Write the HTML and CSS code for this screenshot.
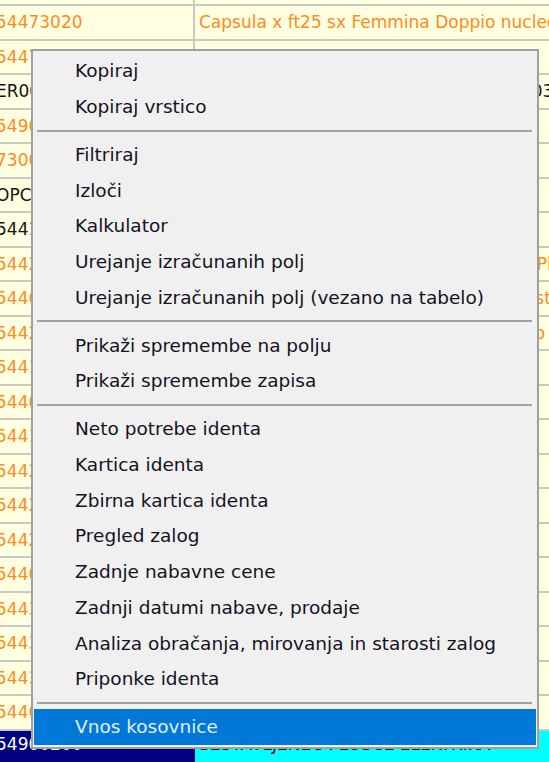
FILE: index.html
```html
<!DOCTYPE html>
<html lang="sl">
<head>
  <meta charset="UTF-8">
  <title>Identi</title>
  <link rel="stylesheet" href="styles.css">
</head>
<body>

  <div class="grid">
    <div class="row"><div class="cell code">54473010</div><div class="cell name">Capsula x ft25 sx Maschio Doppio nucleo</div></div>
    <div class="row"><div class="cell code">54473020</div><div class="cell name">Capsula x ft25 sx Femmina Doppio nucleo</div></div>
    <div class="row"><div class="cell code">54473030</div><div class="cell name">Capsula x ft25 dx Maschio</div></div>
    <div class="row dark"><div class="cell code">ER003100</div><div class="cell name">Elektronika regulacije tipa ER-1 verzija 03</div></div>
    <div class="row"><div class="cell code">54900110</div><div class="cell name">Vijak M6 x 20 DIN 933 pocinkan</div></div>
    <div class="row"><div class="cell code">73000120</div><div class="cell name">Tesnilo gumijasto fi 40</div></div>
    <div class="row dark"><div class="cell code">OPC00015</div><div class="cell name">Opcija sestava</div></div>
    <div class="row dark"><div class="cell code">54410200</div><div class="cell name">Nosilec levi</div></div>
    <div class="row"><div class="cell code">54420110</div><div class="cell name">Pokrov ohišja z odprtino za kabel, bela, Plastika</div></div>
    <div class="row"><div class="cell code">54460300</div><div class="cell name">Distančnik plastični 8 mm za vgradnjo, standard</div></div>
    <div class="row"><div class="cell code">54420500</div><div class="cell name">Vodilo aluminijasto 1500 mm, eloksirano I</div></div>
    <div class="row"><div class="cell code">54410300</div><div class="cell name">Nosilec desni</div></div>
    <div class="row"><div class="cell code">54400100</div><div class="cell name">Ohišje spodnje</div></div>
    <div class="row"><div class="cell code">54410400</div><div class="cell name">Nosilec srednji</div></div>
    <div class="row"><div class="cell code">54420600</div><div class="cell name">Pokrov zgornji</div></div>
    <div class="row"><div class="cell code">54420700</div><div class="cell name">Pokrov stranski</div></div>
    <div class="row"><div class="cell code">54420800</div><div class="cell name">Pokrov zadnji</div></div>
    <div class="row"><div class="cell code">54400200</div><div class="cell name">Ohišje zgornje</div></div>
    <div class="row"><div class="cell code">54430100</div><div class="cell name">Plošča montažna</div></div>
    <div class="row"><div class="cell code">54430200</div><div class="cell name">Plošča vmesna</div></div>
    <div class="row"><div class="cell code">54430300</div><div class="cell name">Plošča čelna</div></div>
    <div class="row"><div class="cell code">54400300</div><div class="cell name">Ohišje komplet</div></div>
    <div class="row selected"><div class="cell code">54900200</div><div class="cell name">SESTAVLJENEC PLOŠČE ELEKTRIKA</div></div>
  </div>

  <!-- context menu over the grid -->
  <div class="menu">
    <div class="item">Kopiraj</div>
    <div class="item">Kopiraj vrstico</div>
    <div class="sep"></div>
    <div class="item">Filtriraj</div>
    <div class="item">Izloči</div>
    <div class="item">Kalkulator</div>
    <div class="item">Urejanje izračunanih polj</div>
    <div class="item">Urejanje izračunanih polj (vezano na tabelo)</div>
    <div class="sep"></div>
    <div class="item">Prikaži spremembe na polju</div>
    <div class="item">Prikaži spremembe zapisa</div>
    <div class="sep"></div>
    <div class="item">Neto potrebe identa</div>
    <div class="item">Kartica identa</div>
    <div class="item">Zbirna kartica identa</div>
    <div class="item">Pregled zalog</div>
    <div class="item">Zadnje nabavne cene</div>
    <div class="item">Zadnji datumi nabave, prodaje</div>
    <div class="item">Analiza obračanja, mirovanja in starosti zalog</div>
    <div class="item">Priponke identa</div>
    <div class="sep"></div>
    <div class="item active">Vnos kosovnice</div>
  </div>

</body>
</html>
```

FILE: styles.css
```css
body {
  margin: 0;
  height: 762px;
  overflow: hidden;
  position: relative;
  background: #ffffe1;
  font-family: "DejaVu Sans", sans-serif;
}

.grid {
  margin-top: -28.5px;
  margin-left: -8px;
}

.row {
  display: grid;
  grid-template-columns: 203px 1fr;
  height: 34.5px;
  box-sizing: border-box;
  border-bottom: 2px solid #c9c9c0;
  color: #ff8a1e;
  font-size: 17px;
}

.row.dark {
  color: #141414;
}

.cell {
  display: flex;
  align-items: center;
  padding-left: 4px;
  white-space: nowrap;
  overflow: hidden;
}

.code {
  border-right: 2px solid #c9c9c0;
}

.row.selected {
  border-bottom: none;
}

.row.selected .cell {
  padding-bottom: 7px;
}

.row.selected .code {
  background: #000080;
  color: #ffffff;
  border-right: none;
}

.row.selected .name {
  background: #00ffff;
  color: #000000;
}

.menu {
  position: absolute;
  left: 31px;
  top: 49px;
  width: 508px;
  box-sizing: border-box;
  padding: 2px 1px;
  background: #f0f0f0;
  border: 2px solid #a0a0a0;
  font-size: 18.5px;
  color: #16121f;
}

.item {
  height: 35.75px;
  display: flex;
  align-items: center;
  padding-left: 41px;
}

.item.active {
  background: #0078d7;
  color: #e4eefa;
}

.sep {
  height: 12px;
  display: flex;
  align-items: center;
  margin: 0 4px 0 3px;
}

.sep::before {
  content: "";
  flex: 1;
  height: 2px;
  background: #a0a0a0;
}
```
